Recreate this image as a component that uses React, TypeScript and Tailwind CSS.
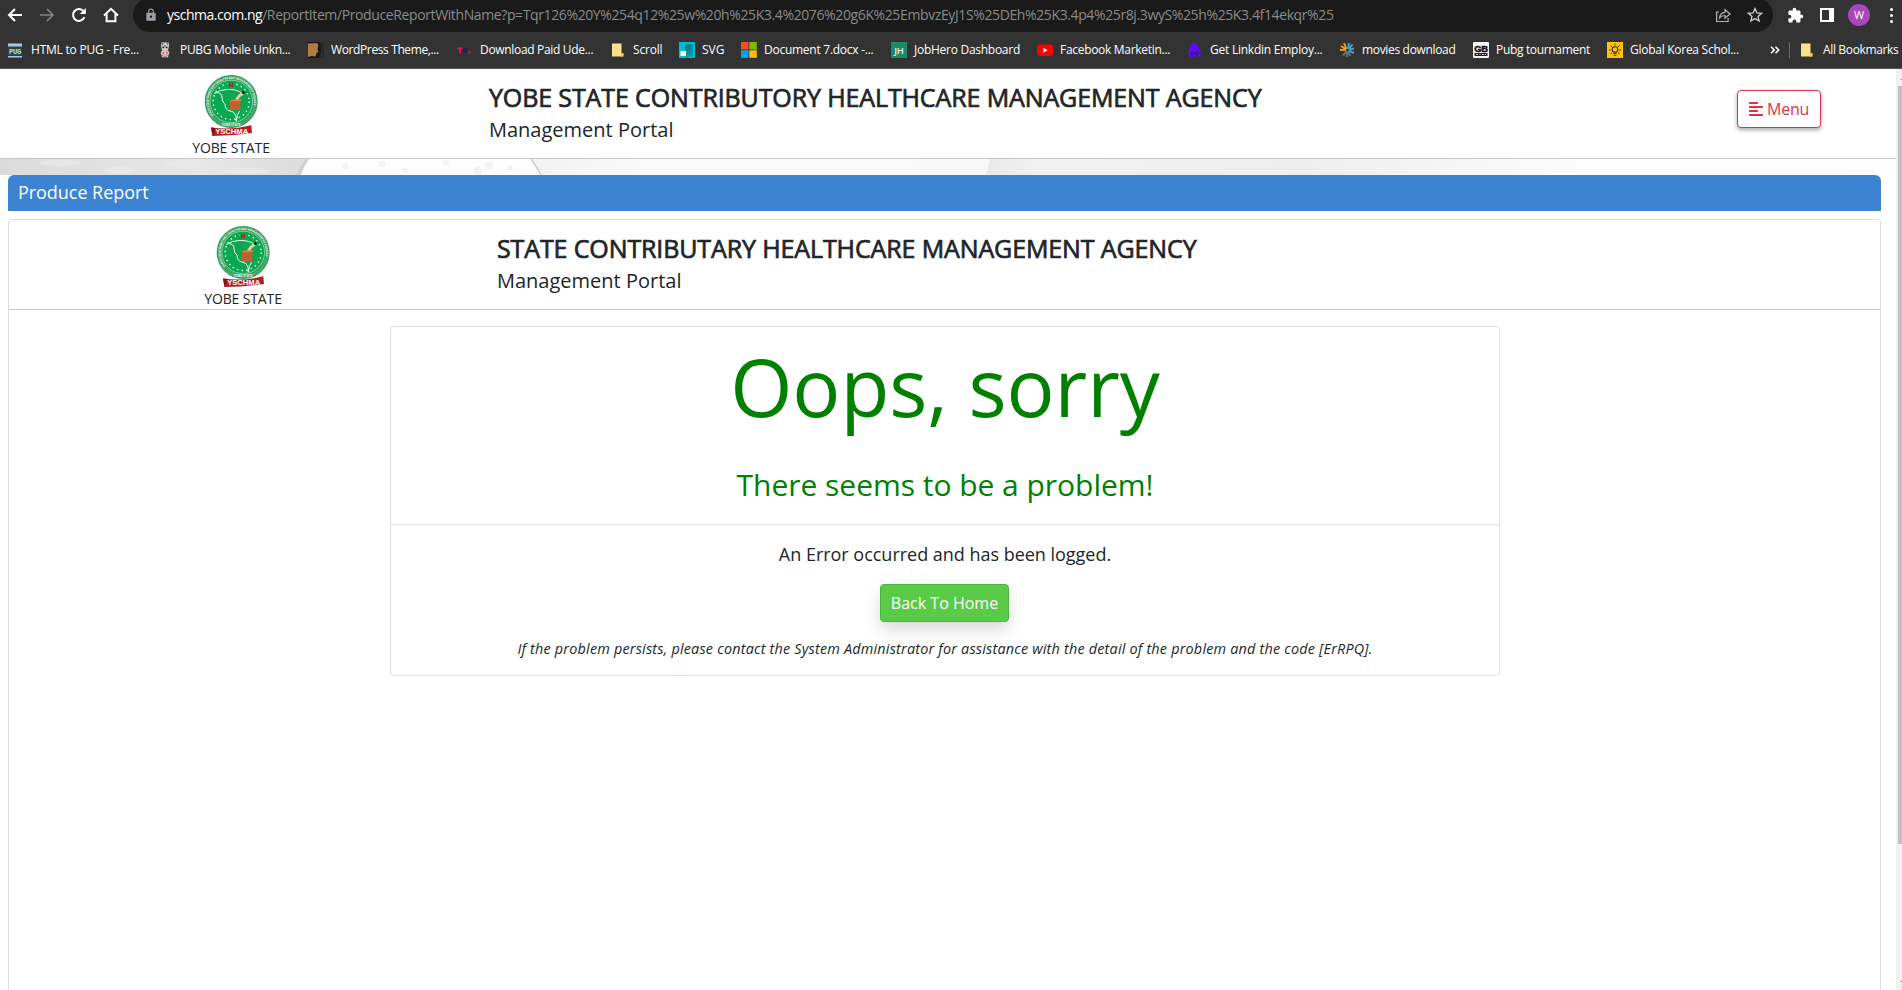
import type { ReactNode } from 'react';
import { FaAlignLeft } from 'react-icons/fa';
import { MdExtension, MdLock } from 'react-icons/md';

const URL_PATH =
  '/ReportItem/ProduceReportWithName?p=Tqr126%20Y%254q12%25w%20h%25K3.4%2076%20g6K%25EmbvzEyJ1S%25DEh%25K3.4p4%25r8j.3wyS%25h%25K3.4f14ekqr%25';

function FolderIcon() {
  return (
    <svg viewBox="0 0 16 16" className="size-4 shrink-0">
      <path d="M2 1.5h9.5v10.5l1.8 0v2.5H2z" fill="#ffe08a" />
      <path d="M11.5 11h2v3.5h-3z" fill="#f2c94f" />
    </svg>
  );
}

const icons: Record<string, ReactNode> = {
  pug: (
    <svg viewBox="0 0 16 16" className="size-4 shrink-0">
      <rect x="0" y="1.5" width="14" height="14" fill="#2d4150" />
      <rect x="0" y="1.5" width="14" height="3" fill="#a9c8e6" />
      <rect x="0" y="14" width="14" height="1.5" fill="#a9c8e6" />
      <text x="7" y="12" fontSize="7" textAnchor="middle" fontFamily="Liberation Mono, monospace" fontWeight="700" fill="#b8e0c8">PUG</text>
    </svg>
  ),
  cow: (
    <svg viewBox="0 0 16 16" className="size-4 shrink-0">
      <path d="M4 .5h8v3l-1 5H5L4 4z" fill="#d8d8d8" />
      <path d="M4 .5l3 1-2 2.500zM9 .5l3 1-1.500 2zM7 3h2v1.500H7z" fill="#6a6a6a" />
      <circle cx="6.300" cy="5.500" r="1" fill="#222" />
      <circle cx="9.700" cy="5.500" r="1" fill="#222" />
      <ellipse cx="8" cy="11" rx="4.300" ry="3" fill="#f0b8bc" />
      <path d="M4.500 13.300q3.500 2.400 7 0l-.5 2H5z" fill="#d9d9d9" />
      <circle cx="6.200" cy="11" r="0.800" fill="#7a3b44" />
      <circle cx="9.800" cy="11" r="0.800" fill="#7a3b44" />
    </svg>
  ),
  wood: (
    <svg viewBox="0 0 16 16" className="size-4 shrink-0">
      <rect width="16" height="16" fill="#1c1611" />
      <path d="M0 1.500l9-.5 1.500 2-1 4 1 3-2 1-1 3.500-4-.5-3.500 1z" fill="#b07a40" />
      <path d="M12 0h4v16h-5l2-6z" fill="#2f2a26" />
    </svg>
  ),
  tc: (
    <svg viewBox="0 0 16 16" className="size-4 shrink-0">
      <path d="M.5 5.500h5v1.800H4v4H2.200v-4H.5z" fill="#e3174d" />
      <path d="M6 6h4v5H7z" fill="#24244a" />
      <rect x="11.500" y="9.500" width="2" height="2" fill="#e3174d" />
    </svg>
  ),
  folder: <FolderIcon />,
  svg: (
    <svg viewBox="0 0 16 16" className="size-4 shrink-0">
      <rect width="16" height="16" fill="#00bcd4" />
      <path d="M6 2h8v12l-8 2z" fill="#0097a7" />
      <path d="M6 2h6v7H6z" fill="#087f8f" />
      <rect x="1.500" y="9" width="5.500" height="5" fill="#fff" />
    </svg>
  ),
  ms: (
    <svg viewBox="0 0 16 16" className="size-4 shrink-0">
      <rect width="7.500" height="7.500" fill="#f25022" />
      <rect x="8.300" width="7.500" height="7.500" fill="#7fba00" />
      <rect y="8.300" width="7.500" height="7.500" fill="#00a4ef" />
      <rect x="8.300" y="8.300" width="7.500" height="7.500" fill="#ffb900" />
    </svg>
  ),
  jh: (
    <svg viewBox="0 0 16 16" className="size-4 shrink-0">
      <rect width="16" height="16" fill="#1f8a64" />
      <text x="8" y="11.500" fontSize="9.500" textAnchor="middle" fontFamily="Open Sans, sans-serif" fontWeight="600" fill="#e6f4ee">JH</text>
    </svg>
  ),
  yt: (
    <svg viewBox="0 0 16 16" className="size-4 shrink-0">
      <rect y="2.500" width="16" height="11.500" rx="3" fill="#f00" />
      <path d="M6.300 5.700v5l4.200-2.500z" fill="#fff" />
    </svg>
  ),
  hood: (
    <svg viewBox="0 0 16 16" className="size-4 shrink-0">
      <path d="M7.500.5c3 1.500 6 6 6.300 12l-2 3H3.500L1.300 12C2 6 4 2 7.500.5z" fill="#5b0cf0" />
      <circle cx="5.500" cy="11.500" r="1.600" fill="none" stroke="#2b1666" />
      <circle cx="10" cy="11.500" r="1.600" fill="none" stroke="#2b1666" />
      <path d="M4 15.500q3.700-3 7.500 0z" fill="#333" />
    </svg>
  ),
  star: (
    <svg viewBox="0 0 16 16" className="size-4 shrink-0" fill="none" strokeWidth="1.900">
      <path d="M2 4l5 3.500M5 1l2.500 6M1 8l6-.3" stroke="#f39a2e" />
      <path d="M9 7l1-6M9.500 7l4-4.500M10 8l5-1.500M10 9l5 2" stroke="#35a6dc" />
      <path d="M8 9l-4 4.500M8 9l0 6M8.500 9l3 5" stroke="#66707a" />
    </svg>
  ),
  gb: (
    <svg viewBox="0 0 16 16" className="size-4 shrink-0">
      <rect width="16" height="16" rx="1" fill="#f5f5f5" />
      <text x="8" y="9.500" fontSize="9.500" textAnchor="middle" fontFamily="Liberation Sans, sans-serif" fontWeight="700" fill="#111" stroke="#111" strokeWidth="0.400">GB</text>
      <rect x="1.500" y="11" width="13" height="3" fill="#222" />
      <path d="M3 12.500h2m1.500 0h1m1.500 0h2m1 0h1" stroke="#f5f5f5" strokeWidth="0.800" />
    </svg>
  ),
  bulb: (
    <svg viewBox="0 0 16 16" className="size-4 shrink-0">
      <rect width="16" height="16" fill="#ffc20e" />
      <circle cx="8" cy="7.500" r="2.800" fill="none" stroke="#3a2d05" strokeWidth="1.100" />
      <path d="M6.500 11.500h3M6.500 13.300h3M8 1.500v1.800M2 8h1.800M12.200 8H14M3.600 3.600l1.300 1.300M12.400 3.600l-1.300 1.300M3.500 12l1.400-1.200M12.500 12l-1.400-1.200" stroke="#3a2d05" />
    </svg>
  ),
};

const bookmarks = [
  { icon: 'pug', label: 'HTML to PUG - Fre...', width: 'w-[149px]', track: 'tracking-[-0.22px]' },
  { icon: 'cow', label: 'PUBG Mobile Unkn...', width: 'w-[151px]', track: 'tracking-[-0.3px]' },
  { icon: 'wood', label: 'WordPress Theme,...', width: 'w-[149px]', track: 'tracking-[-0.38px]' },
  { icon: 'tc', label: 'Download Paid Ude...', width: 'w-[153px]', track: 'tracking-[-0.32px]' },
  { icon: 'folder', label: 'Scroll', width: 'w-[69px]', track: 'tracking-[-0.2px]' },
  { icon: 'svg', label: 'SVG', width: 'w-[62px]', track: 'tracking-normal' },
  { icon: 'ms', label: 'Document 7.docx -...', width: 'w-[150px]', track: 'tracking-[-0.26px]' },
  { icon: 'jh', label: 'JobHero Dashboard', width: 'w-[146px]', track: 'tracking-[-0.27px]' },
  { icon: 'yt', label: 'Facebook Marketin...', width: 'w-[150px]', track: 'tracking-[-0.3px]' },
  { icon: 'hood', label: 'Get Linkdin Employ...', width: 'w-[152px]', track: 'tracking-[-0.24px]' },
  { icon: 'star', label: 'movies download', width: 'w-[134px]', track: 'tracking-[-0.33px]' },
  { icon: 'gb', label: 'Pubg tournament', width: 'w-[134px]', track: 'tracking-[-0.33px]' },
  { icon: 'bulb', label: 'Global Korea Schol...', width: 'w-[163px]', track: 'tracking-[-0.27px]' },
];

function AddressBar() {
  return (
    <div className="flex h-8 items-start">
      <div className="flex w-[133px] shrink-0 items-center pt-[7px] pl-[7px]">
        <svg viewBox="0 0 16 16" className="size-4" fill="none" stroke="#fff" strokeWidth="2">
          <path d="M15 8H2.500M8 2L2 8l6 6" />
        </svg>
        <svg viewBox="0 0 16 16" className="ml-4 size-4" fill="none" stroke="#858585" strokeWidth="1.700">
          <path d="M1 8h12.500M8 2l6 6-6 6" />
        </svg>
        <svg viewBox="0 0 16 16" className="ml-4 size-4" fill="none" stroke="#fff" strokeWidth="2">
          <path d="M13.400 10.200A5.900 5.900 0 1 1 12.300 4" />
          <path d="M14.800 1v6H8.800z" fill="#fff" stroke="none" />
        </svg>
        <svg viewBox="0 0 16 16" className="ml-4 size-4" fill="none" stroke="#fff" strokeWidth="2">
          <path d="M1 8.500L8 1.800l7 6.700M3.600 7v7.200h8.800V7" />
        </svg>
      </div>
      <div className="-mt-0.5 flex h-[34px] w-[1640px] shrink-0 items-center rounded-full bg-[#1a1a1a] pr-[10px] pl-[11px]">
        <MdLock className="mr-[9px] size-3.5 text-[#9aa0a6]" />
        <p className="flex-1 text-sm whitespace-nowrap text-[#8c8c8c]">
          <span className="tracking-[-0.48px] text-white">yschma.com.ng</span>
          <span className="tracking-[-0.385px]">{URL_PATH}</span>
        </p>
        <svg viewBox="0 0 16 16" className="size-4" fill="none" stroke="#b5b5b5" strokeWidth="1.200">
          <path d="M4 5H1.600v9.500h11.500V11" />
          <path d="M4.500 11C4.800 7.500 7 5.500 10 5.300V2.500L15 7l-5 4.200V8.500C7.500 8.500 5.800 9.300 4.500 11z" />
        </svg>
        <svg viewBox="0 0 16 16" className="ml-4 size-4" fill="none" stroke="#d0d0d0" strokeWidth="1.300">
          <path d="M8 1.600l1.900 4.300 4.700.4-3.600 3.100 1.100 4.600L8 11.600 3.900 14 5 9.400 1.400 6.300l4.700-.4z" />
        </svg>
      </div>
      <div className="flex h-[30px] flex-1 items-center pl-3.5">
        <MdExtension className="size-[17px] text-white" />
        <div className="ml-4 h-3.5 w-3.5 border-2 border-r-[5px] border-white" />
        <div className="ml-3.5 flex size-[22px] items-center justify-center rounded-full bg-[#ab47bc] text-[11px] text-white">W</div>
        <div className="ml-5 flex flex-col gap-[3px]">
          <i className="size-[3px] rounded-full bg-white" />
          <i className="size-[3px] rounded-full bg-white" />
          <i className="size-[3px] rounded-full bg-white" />
        </div>
      </div>
    </div>
  );
}

function BookmarksBar() {
  return (
    <div className="flex h-9 items-center pl-2 text-xs text-white">
      {bookmarks.map((b) => (
        <div key={b.label} className={`flex shrink-0 items-center gap-[7px] whitespace-nowrap ${b.width} ${b.track}`}>
          {icons[b.icon]}
          <span>{b.label}</span>
        </div>
      ))}
      <svg viewBox="0 0 10 8" className="h-2 w-2.5 shrink-0" fill="none" stroke="#fff" strokeWidth="1.600">
        <path d="M1 .8L4.200 4 1 7.200M5.500.8L8.700 4 5.500 7.200" />
      </svg>
      <div className="ml-[9px] h-4 w-px bg-[#6a6a6a]" />
      <div className="ml-[9px] flex items-center gap-[8px] tracking-[-0.35px] whitespace-nowrap">
        <FolderIcon />
        <span>All Bookmarks</span>
      </div>
    </div>
  );
}

function Crest({ id }: { id: string }) {
  return (
    <svg viewBox="0 0 60 65" className="h-[65px] w-[60px]">
      <defs>
        <path id={id} d="M12.500 43.500 A22.600 22.600 0 1 1 48 43.500" />
      </defs>
      <circle cx="30.200" cy="29.500" r="26.500" fill="#2f9d5c" />
      <circle cx="30.200" cy="29.500" r="24" fill="none" stroke="#8fd0a6" strokeWidth="3" strokeDasharray="1.300 0.900" opacity="0.350" />
      <circle cx="30.200" cy="29.500" r="21.300" fill="#07a850" stroke="#c9ead4" strokeWidth="0.600" />
      <circle cx="30.200" cy="29.500" r="18" fill="none" stroke="#eafff0" strokeWidth="1.500" strokeDasharray="1.500 3.210" />
      <text fontSize="3" fontWeight="700" fill="#e2f5e8" fontFamily="Open Sans, sans-serif">
        <textPath href={`#${id}`}>STATE CONTRIBUTORY HEALTHCARE MANAGEMENT AGENCY</textPath>
      </text>
      <rect x="26.500" y="9.500" width="8" height="5.500" fill="#07a850" />
      <text x="30.300" y="14.500" fontSize="6" fontWeight="700" textAnchor="middle" fill="#b3241c" stroke="#b3241c" strokeWidth="0.500" fontFamily="Liberation Sans, sans-serif">H</text>
      <path d="M13.500 21.500q6-4 12.500-4 9-.5 15 3.500M14.500 20.500q7 0 6.500 5.500 .5 5 3 6 0 6 5 7 4 0 5.500 4 1.500 3 .5 6.500M38.500 39q-3 4-3 10" fill="none" stroke="#f1fbf4" strokeWidth="1" />
      <path d="M34 27l3.500-4.500 3.500-2 2 2-4 2.500-2 3.500z" fill="#f0c9a0" />
      <path d="M40.500 20.500l2-1.800 1.500 1.500-1.500 2.300z" fill="#111" />
      <rect x="29" y="29" width="10.500" height="9" fill="#c7602f" />
      <path d="M29 29h10.500l1.500-1.500H31z" fill="#dd8350" />
      <text x="30.200" y="54" fontSize="3.200" fontWeight="700" textAnchor="middle" fill="#e2f5e8" fontFamily="Open Sans, sans-serif">YOBE STATE</text>
      <path d="M10 55.500q20 3 40.300-2.200L51 61q-20 3-39.500 3z" fill="#b01f24" />
      <path d="M10 55.500l5 .5-3.500 8z" fill="#7f1519" />
      <text x="30.700" y="62" fontSize="6.800" fontWeight="700" textAnchor="middle" textLength="33" lengthAdjust="spacingAndGlyphs" fill="#fff" fontFamily="Liberation Sans, sans-serif">YSCHMA</text>
    </svg>
  );
}

function AgencyHeader({ id, title, logoCol, textPad, children }: { id: string; title: string; logoCol: string; textPad: string; children?: ReactNode }) {
  return (
    <header className="flex h-[90px] shrink-0 items-start border-b border-[#c8c8c8] bg-white">
      <div className={`flex shrink-0 flex-col items-center pt-[3px] ${logoCol}`}>
        <Crest id={id} />
        <span className="mt-px text-sm leading-5 tracking-[-0.13px]">YOBE STATE</span>
      </div>
      <div className={`flex-1 pt-[13px] whitespace-nowrap ${textPad}`}>
        <h1 className="text-[25px] leading-[30px] tracking-[-0.12px] [-webkit-text-stroke:0.7px_#212529]">{title}</h1>
        <p className="mt-1.5 text-xl leading-6">Management Portal</p>
      </div>
      {children}
    </header>
  );
}

function BackdropStrip() {
  return (
    <svg viewBox="0 0 1896 16" preserveAspectRatio="none" className="h-4 w-full shrink-0">
      <defs>
        <linearGradient id="haze">
          <stop offset="0" stopColor="#dadada" />
          <stop offset="0.080" stopColor="#e0e0e0" />
          <stop offset="0.200" stopColor="#e6e6e6" />
          <stop offset="0.300" stopColor="#dddddd" />
          <stop offset="0.530" stopColor="#f2f2f2" />
          <stop offset="0.640" stopColor="#f9f9f9" />
          <stop offset="0.850" stopColor="#fafafa" />
          <stop offset="1" stopColor="#f7f7f7" />
        </linearGradient>
        <linearGradient id="fade">
          <stop offset="0" stopColor="#e9e9e9" />
          <stop offset="0.060" stopColor="#f1f1f1" />
          <stop offset="0.350" stopColor="#eeeeee" />
          <stop offset="0.650" stopColor="#fcfcfc" />
          <stop offset="1" stopColor="#fefefe" />
        </linearGradient>
      </defs>
      <rect width="1000" height="16" fill="url(#haze)" />
      <g fill="#eaeaea" opacity="0.700">
        <ellipse cx="60" cy="4" rx="22" ry="3" />
        <ellipse cx="120" cy="11" rx="16" ry="4" />
        <ellipse cx="185" cy="5" rx="20" ry="4" />
        <ellipse cx="245" cy="12" rx="24" ry="3" />
      </g>
      <path d="M990 0H1896V16H986z" fill="url(#fade)" />
      <path d="M296 16Q300 7 306 0H312V16z" fill="#cfcfcf" />
      <path d="M301 16Q304 7 309 0H531Q537 8 541 16z" fill="#fdfdfd" />
      <path d="M531 0Q537 8 541 16" fill="none" stroke="#cccccc" strokeWidth="1.500" />
      <g fill="#f3f3f3">
        <circle cx="345" cy="7" r="3" />
        <circle cx="382" cy="5" r="3.500" />
        <circle cx="405" cy="12" r="3" />
        <circle cx="446" cy="4" r="3" />
        <circle cx="478" cy="12" r="4" />
        <circle cx="489" cy="6" r="4" />
        <circle cx="510" cy="9" r="3" />
      </g>
    </svg>
  );
}

export default function App() {
  return (
    <div className="flex h-[990px] w-full flex-col overflow-hidden bg-white font-['Open_Sans',sans-serif] text-[#212529]">
      <div className="h-[69px] shrink-0 border-b border-[#5a5a5a] bg-[#333333]">
        <AddressBar />
        <BookmarksBar />
      </div>
      <div className="flex min-h-0 flex-1">
        <main className="flex w-[1896px] shrink-0 flex-col">
          <AgencyHeader id="rim-top" title="YOBE STATE CONTRIBUTORY HEALTHCARE MANAGEMENT AGENCY" logoCol="w-[462px]" textPad="pl-[27px]">
            <button className="mt-[21px] mr-[75px] flex h-[38px] w-[84px] items-center rounded border border-[#dc3545] bg-white pl-2.5 text-base text-[#dc3545] shadow-[0_2px_4px_rgba(0,0,0,0.35)]">
              <FaAlignLeft className="mr-[3px] size-4" />
              <span className="tracking-[-0.2px]">Menu</span>
            </button>
          </AgencyHeader>
          <BackdropStrip />
          <section className="flex min-h-0 flex-1 flex-col pr-[15px] pl-2">
            <h2 className="h-9 shrink-0 rounded-t-md bg-[#3c83d2] pt-[5px] pl-2.5 text-lg leading-6 tracking-[-0.05px] text-white">Produce Report</h2>
            <div className="mt-2 flex min-h-0 flex-1 flex-col rounded-t border border-b-0 border-[#dcdcdc] bg-white">
              <AgencyHeader id="rim-card" title="STATE CONTRIBUTARY HEALTHCARE MANAGEMENT AGENCY" logoCol="w-[468px]" textPad="pl-5" />
              <div className="mt-4 ml-[381px] flex h-[350px] w-[1110px] flex-col rounded border border-[#dfdfdf] bg-white text-center">
                <div className="h-[198px] shrink-0 border-b border-[#dfdfdf] pt-[11px] text-[#008000]">
                  <p className="text-[80px] leading-[96px] tracking-[-0.1px]">Oops, sorry</p>
                  <p className="mt-[33px] text-[30px] leading-9 tracking-[-0.03px]">There seems to be a problem!</p>
                </div>
                <div className="flex flex-col items-center pt-4">
                  <p className="text-lg leading-[27px] tracking-[-0.02px]">An Error occurred and has been logged.</p>
                  <button className="mt-4 mr-px h-[38px] w-[129px] rounded border border-[#4cb33c] bg-[#5acb46] text-base text-white shadow-[0_8px_16px_rgba(0,0,0,0.15)]">
                    Back To Home
                  </button>
                  <p className="mt-4 text-[14.4px] leading-[21px] tracking-[0.2px] italic">
                    If the problem persists, please contact the System Administrator for assistance with the detail of the problem and the code [ErRPQ].
                  </p>
                </div>
              </div>
            </div>
          </section>
        </main>
        <div className="flex w-1.5 flex-col bg-[#f1f1f1] pl-0.5">
          <div className="h-[17px] shrink-0 pt-2.5 pl-[3px]">
            <div className="h-px bg-[#777777]" />
          </div>
          <div className="h-[758px] shrink-0 bg-[#c1c1c1]" />
          <div className="pt-[137px] pl-[3px]">
            <div className="h-px bg-[#505050]" />
          </div>
        </div>
      </div>
    </div>
  );
}
